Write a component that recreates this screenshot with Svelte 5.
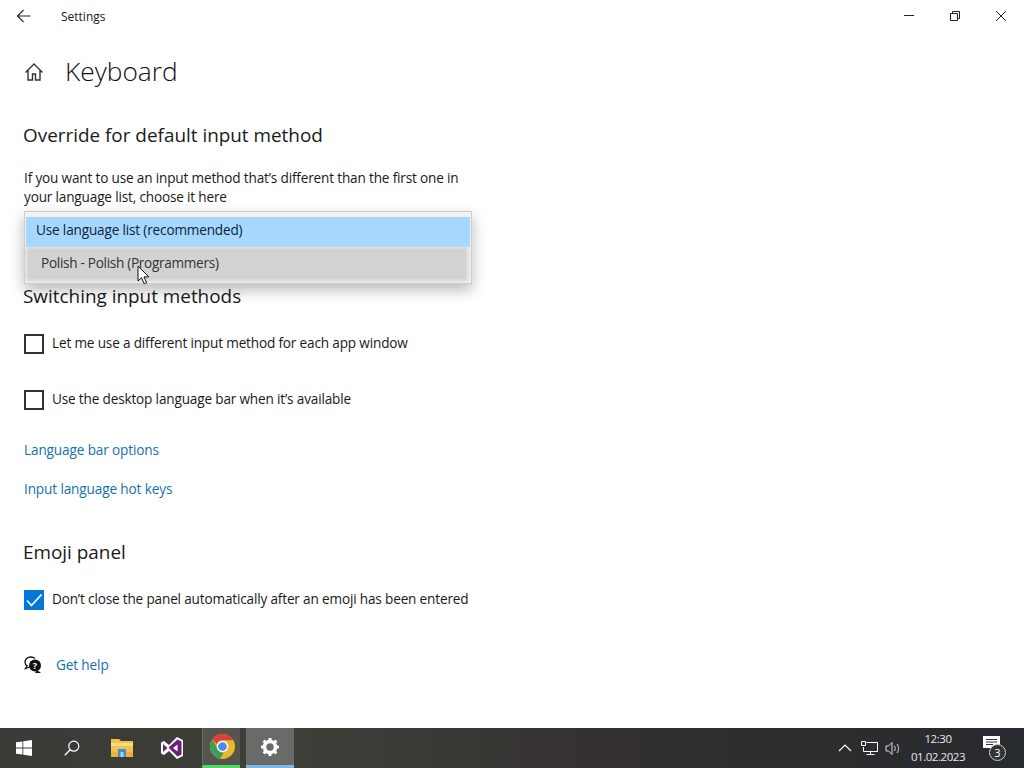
<script>
	const taskIcons = ['start', 'search', 'folder', 'vs', 'chrome', 'gear'];
</script>

<div class="screen">
	<div class="titlebar">
		<button class="back" aria-label="Back">
			<svg width="16" height="16" viewBox="0 0 16 16"><path d="M14.5 8H1.5M7.5 2L1.5 8l6 6" fill="none" stroke="#222" stroke-width="1.1" /></svg>
		</button>
		<span class="apptitle">Settings</span>
		<div class="controls">
			<button aria-label="Minimize"><svg width="12" height="12" viewBox="0 0 12 12"><path d="M1 5.500h10" stroke="#222" fill="none" /></svg></button>
			<button aria-label="Restore"><svg width="12" height="12" viewBox="0 0 12 12"><path d="M1.500 3.500h7v7h-7zM3.500 3.500v-2h7v7h-2" stroke="#222" fill="none" /></svg></button>
			<button aria-label="Close"><svg width="12" height="12" viewBox="0 0 12 12"><path d="M1 1l10 10M11 1L1 11" stroke="#222" fill="none" /></svg></button>
		</div>
	</div>

	<main>
		<header>
			<svg width="20" height="20" viewBox="0 0 20 20"><path d="M1.500 10.500L10 2l8.500 8.500M4 8.500V18h4.500v-6h3v6H16V8.500" fill="none" stroke="#333" stroke-width="1.400" /></svg>
			<h1>Keyboard</h1>
		</header>

		<h2 class="first">Override for default input method</h2>
		<p class="intro">If you want to use an input method that’s different than the first one in your language list, choose it here</p>

		<div class="dropdown-slot">
			<div class="dropdown">
				<div class="opt selected"><span>Use language list (recommended)</span></div>
				<div class="opt pressed"><span>Polish - Polish (Programmers)</span></div>
				<svg class="cursor" width="14" height="20" viewBox="0 0 14 20"><path d="M1 1v15l3.500-3.300 2.600 6 2.500-1-2.600-5.800h4.800z" fill="#fff" stroke="#111" stroke-width="1" /></svg>
			</div>
		</div>

		<h2 class="switching">Switching input methods</h2>
		<label class="check one"><span class="box"></span><span class="txt">Let me use a different input method for each app window</span></label>
		<label class="check two"><span class="box"></span><span class="txt">Use the desktop language bar when it’s available</span></label>

		<a class="link bar" href="#options">Language bar options</a>
		<a class="link hot" href="#hotkeys">Input language hot keys</a>

		<h2 class="emoji">Emoji panel</h2>
		<label class="check three">
			<span class="box on">
				<svg width="20" height="20" viewBox="0 0 20 20"><path d="M3 10.500l4.500 5L17.500 4.500" fill="none" stroke="#fff" stroke-width="1.800" /></svg>
			</span>
			<span class="txt">Don’t close the panel automatically after an emoji has been entered</span>
		</label>

		<div class="help">
			<svg width="18" height="18" viewBox="0 0 18 18">
				<path d="M11 2.500C9.800 1.500 8.300 1 6.800 1 3.500 1 1 3.200 1 6c0 1.700.9 3.100 2.200 4L1.500 12.500l4-1.500" fill="none" stroke="#111" stroke-width="1.300" />
				<circle cx="11" cy="9.500" r="6" fill="#111" />
				<path d="M13 14l4 3h-6z" fill="#111" />
				<text x="11" y="12.700" class="q">?</text>
			</svg>
			<a class="link" href="#help">Get help</a>
		</div>
	</main>

	<footer class="taskbar">
		{#each taskIcons as icon}
			<div class="task {icon}">
				{#if icon === 'start'}
					<svg width="16" height="16" viewBox="0 0 16 16"><path d="M0 2.300l6.500-.9v6.200H0zM7.300 1.300L16 0v7.600H7.300zM0 8.400h6.500v6.200L0 13.700zM7.300 8.400H16V16l-8.700-1.300z" fill="#fff" /></svg>
				{:else if icon === 'search'}
					<svg width="16" height="16" viewBox="0 0 16 16"><circle cx="9.800" cy="6.200" r="5" fill="none" stroke="#fff" stroke-width="1.200" /><path d="M6.200 9.800L.8 15.200" stroke="#fff" stroke-width="1.300" /></svg>
				{:else if icon === 'folder'}
					<svg width="22" height="20" viewBox="0 0 22 20"><path d="M0 1h8l2 2h12v15H0z" fill="#f0c14e" /><path d="M0 5h22v3H0z" fill="#fadb85" /><path d="M0 14h22v5H0z" fill="#e9b43c" /><path d="M7 11h8v8H7z" fill="#3f8fc4" /><path d="M9.500 14h3v5h-3z" fill="#a8d4ee" /></svg>
				{:else if icon === 'vs'}
					<svg width="24" height="24" viewBox="0 0 24 24"><path d="M17 1l6 3v16l-6 3-8-8-5 4-3-1.500v-11L4 5l5 4z" fill="#fff" /><path d="M17.500 3.500l4 2v13l-4 2-9-9zM3 8l4.500 4L3 16z" fill="#68217a" /><path d="M17.500 8.500v7L13 12z" fill="#fff" /></svg>
				{:else if icon === 'chrome'}
					<svg width="25" height="25" viewBox="0 0 24 24">
						<circle cx="12" cy="12" r="12" fill="#e8b92f" />
						<path d="M12 0a12 12 0 0 1 10.400 6H12a6 6 0 0 0-5.500 3.500L2.200 5A12 12 0 0 1 12 0z" fill="#d9443a" />
						<path d="M2.200 5l4.800 8.500a6 6 0 0 0 6 4.300L9.900 23.800A12 12 0 0 1 2.200 5z" fill="#3d9e54" />
						<circle cx="12" cy="12" r="5.500" fill="#fff" />
						<circle cx="12" cy="12" r="4.200" fill="#4a8bf0" />
					</svg>
				{:else}
					<svg width="20" height="20" viewBox="0 0 20 20">
						<circle cx="10" cy="10" r="5.500" fill="none" stroke="#fff" stroke-width="3.600" />
						<path d="M10 1v4M10 15v4M1 10h4M15 10h4M3.600 3.600l2.900 2.900M13.500 13.500l2.900 2.900M16.400 3.600l-2.900 2.900M6.500 13.500l-2.900 2.900" stroke="#fff" stroke-width="3" />
					</svg>
				{/if}
			</div>
		{/each}

		<div class="tray">
			<svg width="14" height="8" viewBox="0 0 14 8"><path d="M1 7l6-6 6 6" fill="none" stroke="#fff" stroke-width="1.200" /></svg>
			<svg class="net" width="17" height="15" viewBox="0 0 17 15"><path d="M5.500 1.500h11v9h-14V6M9.500 10.500v3M5.500 13.500h8" fill="none" stroke="#fff" /><path d="M.5.500h4v4h-4z" fill="none" stroke="#fff" /></svg>
			<svg class="vol" width="16" height="15" viewBox="0 0 16 15"><path d="M1 5h2.500L7 1.500v12L3.500 10H1zM9.500 5c1 1.500 1 3.500 0 5M12 3c2 2.500 2 6.500 0 9" fill="none" stroke="#ddd" /></svg>
			<div class="clock"><span>12:30</span><span>01.02.2023</span></div>
			<div class="notify">
				<svg width="17" height="14" viewBox="0 0 17 14"><path d="M0 0h17v12H0z" fill="#fff" /><path d="M3 3.500h11M3 6h11M3 8.500h7" stroke="#333" /></svg>
				<span class="badge">3</span>
			</div>
		</div>
	</footer>
</div>

<style>
	:global(body) {
		background: #fff;
	}
	.screen {
		width: 1024px;
		height: 768px;
		display: flex;
		flex-direction: column;
		overflow: hidden;
		font-family: 'Open Sans', 'Noto Sans', sans-serif;
		color: #1a1a1a;
		background: #fff;
	}
	button {
		border: 0;
		background: none;
		padding: 0;
		display: flex;
		align-items: center;
		justify-content: center;
	}
	.titlebar {
		height: 32px;
		display: flex;
		align-items: center;
		flex: none;
	}
	.back {
		width: 48px;
		height: 32px;
	}
	.apptitle {
		margin-left: 13px;
		font-size: 12px;
	}
	.controls {
		margin-left: auto;
		display: flex;
	}
	.controls button {
		width: 46px;
		height: 32px;
	}
	main {
		flex: 1;
		padding: 0 0 0 24px;
		position: relative;
	}
	header {
		display: flex;
		align-items: center;
		height: 40px;
		margin-top: 20px;
	}
	h1 {
		margin: -2px 0 0 21px;
		font-size: 26.300px;
		font-weight: 300;
		line-height: 40px;
		color: #111;
	}
	h2 {
		margin: 0;
		margin-left: -1px;
		font-size: 18.900px;
		font-weight: 400;
		line-height: 26px;
	}
	h2.first {
		margin-top: 30px;
	}
	h2.switching {
		margin-top: -1px;
	}
	.intro {
		margin: 21px 0 0;
		width: 445px;
		font-size: 13.600px;
		letter-spacing: -0.17px;
		line-height: 18.500px;
	}
	.dropdown-slot {
		height: 73px;
		margin: 5px 0 0;
		position: relative;
	}
	.dropdown {
		position: absolute;
		left: 0;
		top: 0;
		width: 448px;
		height: 73px;
		box-sizing: border-box;
		padding: 5px 1px 1px;
		background: #f2f2f2;
		border: 1px solid #ccc;
		box-shadow: 0 6px 14px rgba(0, 0, 0, 0.28);
		font-size: 13.600px;
		letter-spacing: -0.17px;
	}
	.opt {
		height: 30px;
		display: flex;
		align-items: center;
	}
	.opt span {
		margin-bottom: 5px;
	}
	.selected {
		background: #a6d8ff;
		padding-left: 10px;
		color: #0f1f33;
	}
	.pressed {
		background: #d2d2d2;
		margin: 2px 4px 0 2px;
		padding-left: 13px;
		color: #333;
		box-shadow: 0 0 4px 2px #d2d2d2;
		letter-spacing: -0.3px;
	}
	.pressed span {
		margin-bottom: 4px;
	}
	.cursor {
		position: absolute;
		left: 112px;
		top: 53px;
	}
	.check {
		display: flex;
		align-items: center;
		font-size: 13.600px;
		letter-spacing: -0.17px;
		height: 20px;
		gap: 8px;
	}
	.txt {
		margin-bottom: 4px;
	}
	.check.one {
		margin-top: 25px;
	}
	.check.two {
		margin-top: 36px;
	}
	.check.three {
		margin-top: 25px;
	}
	.box {
		width: 20px;
		height: 20px;
		box-sizing: border-box;
		border: 2px solid #333;
		flex: none;
	}
	.box.on {
		background: #0078d7;
		border: 0;
	}
	.box svg {
		display: block;
	}
	.link {
		color: #1570b0;
		text-decoration: none;
		font-size: 13.600px;
		letter-spacing: -0.13px;
		display: block;
		line-height: 20px;
	}
	.bar {
		margin-top: 30px;
	}
	.hot {
		margin-top: 19px;
	}
	h2.emoji {
		margin-top: 40px;
	}
	.help {
		display: flex;
		align-items: center;
		gap: 14px;
		margin-top: 45px;
	}
	.q {
		font-size: 9px;
		font-weight: 700;
		fill: #fff;
		text-anchor: middle;
	}
	.taskbar {
		height: 40px;
		flex: none;
		display: flex;
		align-items: stretch;
		background: linear-gradient(90deg, #3a3a36 0%, #3f3e39 30%, #33302f 60%, #272a2f 100%);
		color: #fff;
	}
	.task {
		width: 48px;
		display: flex;
		align-items: center;
		justify-content: center;
		box-sizing: border-box;
	}
	.task.folder {
		margin-left: 2px;
	}
	.task.vs {
		margin-left: 2px;
	}
	.task.chrome {
		width: 38px;
		margin: 0 6px 0 6px;
		padding-left: 2px;
		background: #55544f;
		border-bottom: 3px solid #4cd964;
		border-left: 1px solid #4f7a4f;
	}
	.task.gear {
		background: #6a6a68;
		border-bottom: 3px solid #7db8e8;
	}
	.tray {
		margin-left: auto;
		display: flex;
		align-items: center;
		padding-right: 24px;
	}
	.net {
		margin-left: 9px;
	}
	.vol {
		margin-left: 7px;
	}
	.clock {
		display: flex;
		flex-direction: column;
		align-items: center;
		width: 56px;
		margin-left: 9px;
		font-size: 11.500px;
		letter-spacing: -0.45px;
		line-height: 18px;
		color: #e8e8e8;
	}
	.notify {
		position: relative;
		margin-left: 17px;
		width: 17px;
		height: 24px;
		display: flex;
	}
	.badge {
		position: absolute;
		left: 6px;
		top: 8px;
		width: 15px;
		height: 15px;
		border-radius: 50%;
		background: #333;
		border: 1px solid #ccc;
		font-size: 11px;
		line-height: 15px;
		text-align: center;
	}
</style>
